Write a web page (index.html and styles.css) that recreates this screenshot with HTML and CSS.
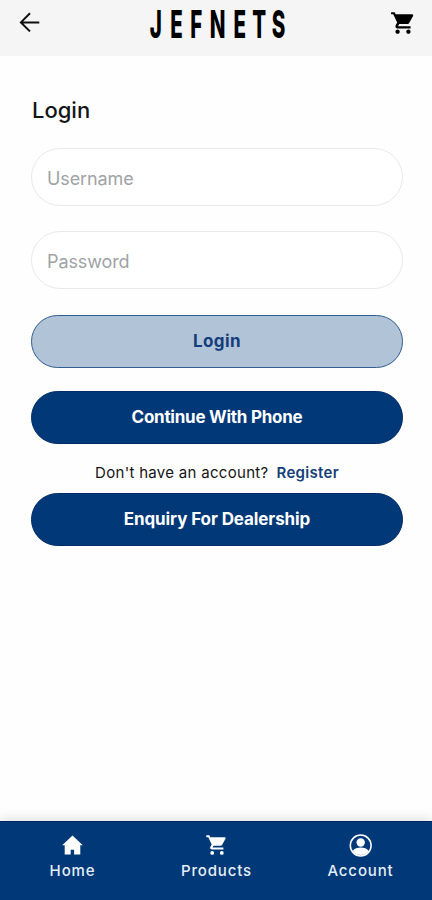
FILE: index.html
```html
<!DOCTYPE html>
<html lang="en">
<head>
    <meta charset="UTF-8">
    <meta name="viewport" content="width=device-width, initial-scale=1.0">
    <title>Login</title>
    <link rel="stylesheet" href="styles.css">
</head>
<body>

    <header class="topbar">
        <a class="icon-link" href="#" aria-label="Back">
            <svg width="21" height="20" viewBox="0 0 21 20" fill="none" stroke="#111" stroke-width="2">
                <path d="M20.300 10.400H2.300M11 1.200L1.900 10.400l9.100 9"/>
            </svg>
        </a>
        <svg class="logo" width="142" height="52" viewBox="0 0 142 52">
            <text transform="scale(0.54 1)" x="5 43 80 116 160 195 231" y="38.500">JEFNETS</text>
        </svg>
        <a class="icon-link" href="#" aria-label="Cart">
            <svg width="26" height="26" viewBox="0 0 24 24" fill="#000">
                <path d="M7 18c-1.1 0-2 .9-2 2s.9 2 2 2 2-.9 2-2-.9-2-2-2zM1 2v2h2l3.6 7.6-1.35 2.45C4.5 15.4 5.5 17 7 17h12v-2H7.4l1.15-2h7.4c.75 0 1.4-.4 1.75-1L21.3 5.5c.35-.65-.1-1.5-.9-1.5H5.2L4.3 2H1zm16 16c-1.1 0-2 .9-2 2s.9 2 2 2 2-.9 2-2-.9-2-2-2z"/>
            </svg>
        </a>
    </header>

    <main class="content">
        <h1>Login</h1>
        <input type="text" placeholder="Username" aria-label="Username">
        <input type="password" placeholder="Password" aria-label="Password">
        <button class="btn btn-login">Login</button>
        <button class="btn btn-phone">Continue With Phone</button>
        <p class="register"><span>Don't have an account?</span><a href="#">Register</a></p>
        <button class="btn btn-dealer">Enquiry For Dealership</button>
    </main>

    <nav class="bottom-nav">
        <a href="#">
            <svg width="24" height="24" viewBox="0 0 24 24" fill="#fff">
                <path d="M12.500 2.500L2.200 12.200h2.500v9.300h6v-4.700h3.400v4.700h6.200v-9.300h2.500z"/>
            </svg>
            <span>Home</span>
        </a>
        <a href="#">
            <svg width="24" height="24" viewBox="0 0 24 24" fill="#fff">
                <path d="M8.200 18a1.900 1.900 0 1 0 0 3.800 1.900 1.900 0 0 0 0-3.800zM2.300 2.300v1.900h2l3.400 7.200-1.300 2.300c-.7 1.300.2 2.800 1.700 2.800h11.300v-1.900H8.500l1-1.900h7.100c.7 0 1.300-.4 1.600-1l3.400-6.100c.3-.6-.1-1.400-.8-1.400H6.300l-.9-1.900H2.300zM17.800 18a1.900 1.900 0 1 0 0 3.800 1.900 1.900 0 0 0 0-3.800z"/>
            </svg>
            <span>Products</span>
        </a>
        <a href="#">
            <svg width="24" height="24" viewBox="0 0 24 24">
                <circle cx="12.700" cy="12.500" r="10.400" fill="none" stroke="#fff" stroke-width="1.500"/>
                <circle cx="12.700" cy="9.500" r="4.200" fill="#fff"/>
                <path d="M4.700 18c1.700-2.500 4.800-3.400 8-3.400s6.300.9 8 3.400a9.900 9.900 0 0 1-16 0z" fill="#fff"/>
            </svg>
            <span>Account</span>
        </a>
    </nav>

</body>
</html>
```

FILE: styles.css
```css
* {
    box-sizing: border-box;
}

body {
    display: flex;
    flex-direction: column;
    height: 900px;
    margin: 0;
    background-color: #fefefe;
    font-family: Inter, "Liberation Sans", sans-serif;
    color: #151515;
}

a {
    text-decoration: none;
}

.topbar {
    display: flex;
    justify-content: space-between;
    height: 56px;
    padding: 0 16px 0 19px;
    background-color: #f5f5f5;
}

.icon-link {
    width: 26px;
    padding-top: 12px;
}

.icon-link:last-child {
    padding-top: 10px;
}

.logo text {
    font-family: Inter, sans-serif;
    font-size: 38px;
    font-weight: 800;
    fill: #000;
}

.content {
    display: flex;
    flex: 1;
    flex-direction: column;
    padding: 38px 29px 0 31px;
}

h1 {
    margin: 0 0 22px 1px;
    font-size: 22px;
    font-weight: 500;
    line-height: 32px;
}

input {
    height: 58px;
    margin: 0 0 26px;
    padding: 3px 15px 0;
    border: 1px solid #e9e9eb;
    border-radius: 29px;
    background-color: #fff;
    font-family: inherit;
    font-size: 18px;
    letter-spacing: -0.1px;
}

input + input {
    margin-top: -1px;
}

input::placeholder {
    color: #a0a3a5;
}

.btn {
    height: 53px;
    padding: 0 0 1px;
    border: 1px solid #002b68;
    border-radius: 27px;
    background-color: #003878;
    color: #fff;
    font-family: inherit;
    font-size: 17px;
    font-weight: 700;
    cursor: pointer;
}

.btn-login {
    margin-bottom: 23px;
    border-color: #315d91;
    background-color: #b1c4d7;
    color: #153c7c;
    letter-spacing: 0.4px;
}

.btn-phone {
    letter-spacing: -0.25px;
}

.btn-dealer {
    letter-spacing: -0.1px;
}

.register {
    display: flex;
    justify-content: center;
    gap: 8px;
    height: 49px;
    margin: 0;
    padding-top: 4px;
    font-size: 15px;
    letter-spacing: 0.3px;
    line-height: 49px;
}

.register a {
    color: #164078;
    font-weight: 600;
}

.bottom-nav {
    display: flex;
    height: 79px;
    background-color: #003878;
    border-top: 1px solid #002460;
    box-shadow: 0 -2px 11px rgba(0, 0, 0, 0.13);
}

.bottom-nav a {
    display: flex;
    flex: 1;
    flex-direction: column;
    align-items: center;
    padding-top: 11px;
    color: #e5eef7;
    font-size: 15px;
    font-weight: 500;
    letter-spacing: 0.85px;
    line-height: 28px;
}

.bottom-nav span {
    padding-left: 1px;
}
```
